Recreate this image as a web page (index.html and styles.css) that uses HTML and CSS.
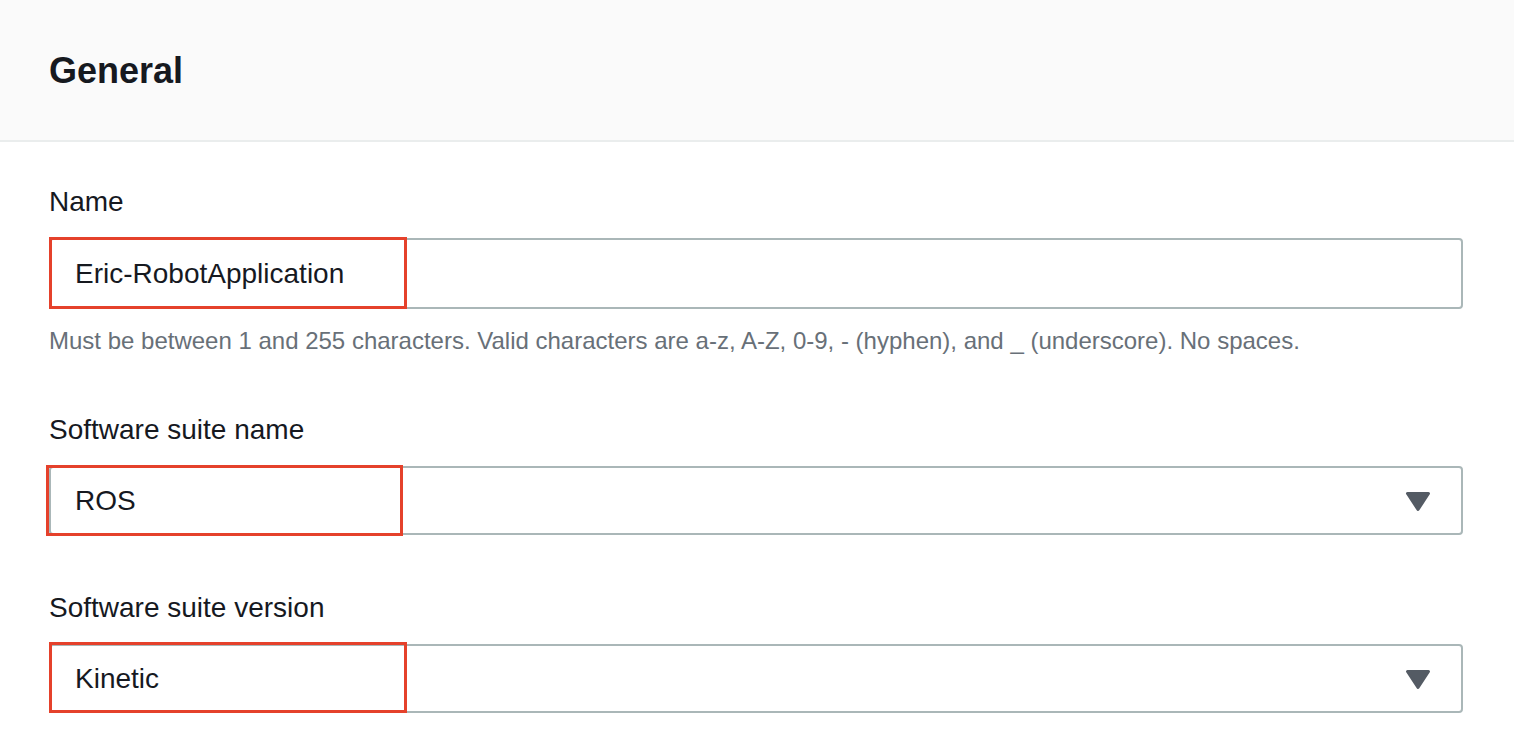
FILE: index.html
```html
<!DOCTYPE html>
<html lang="en">
<head>
<meta charset="utf-8">
<title>General</title>
<link rel="stylesheet" href="styles.css">
</head>
<body>
<section class="panel">
  <header class="panel-header">
    <h2 class="panel-title">General</h2>
  </header>
  <div class="panel-body">
    <div class="field">
      <label class="field-label">Name</label>
      <div class="control">
        <div class="input"><span class="value">Eric-RobotApplication</span></div>
        <div class="mark mark-a"></div>
      </div>
      <p class="hint">Must be between 1 and 255 characters. Valid characters are a-z, A-Z, 0-9, - (hyphen), and _ (underscore). No spaces.</p>
    </div>
    <div class="field">
      <label class="field-label">Software suite name</label>
      <div class="control">
        <div class="input select"><span class="value">ROS</span>
          <svg class="caret" width="26" height="21" viewBox="0 0 26 21"><path d="M2.5 2.5 H23.5 L13 18.5 Z" fill="#545b64" stroke="#545b64" stroke-width="3" stroke-linejoin="round"/></svg>
        </div>
        <div class="mark mark-b"></div>
      </div>
    </div>
    <div class="field">
      <label class="field-label">Software suite version</label>
      <div class="control">
        <div class="input select"><span class="value">Kinetic</span>
          <svg class="caret" width="26" height="21" viewBox="0 0 26 21"><path d="M2.5 2.5 H23.5 L13 18.5 Z" fill="#545b64" stroke="#545b64" stroke-width="3" stroke-linejoin="round"/></svg>
        </div>
        <div class="mark mark-c"></div>
      </div>
    </div>
  </div>
</section>
</body>
</html>
```
FILE: styles.css
```css
* { box-sizing: border-box; }
html, body { margin: 0; padding: 0; background: #ffffff; }
body {
  font-family: "Liberation Sans", Arial, sans-serif;
  color: #16191f;
}
.panel-header {
  height: 142px;
  background: #fafafa;
  border-bottom: 2px solid #eaeded;
  display: flex;
  align-items: center;
  padding: 0 49px;
}
.panel-title {
  margin: 0;
  font-size: 36px;
  line-height: 44px;
  font-weight: 700;
  color: #16191f;
  padding-top: 2px;
}
.panel-body {
  padding: 38px 51px 40px 49px;
  display: flex;
  flex-direction: column;
  gap: 51px;
}
.field { display: flex; flex-direction: column; }
.field-label {
  font-size: 28px;
  line-height: 44px;
  color: #16191f;
  margin-bottom: 14px;
}
.control { position: relative; }
.input {
  height: 71px;
  border: 2px solid #aab7b8;
  border-radius: 4px;
  display: flex;
  align-items: center;
  padding: 0 30px 0 24px;
  background: #fff;
}
.select { height: 69px; }
.value {
  font-size: 28px;
  line-height: 44px;
  color: #16191f;
  flex: 1;
  padding-top: 1px;
}
.caret { display: block; margin-top: 2px; }
.hint {
  margin: 16px 0 0;
  font-size: 24px;
  line-height: 32px;
  color: #687078;
}
.mark {
  position: absolute;
  border: 3px solid #e5412b;
  pointer-events: none;
}
.mark-a { left: 0; top: -1px; width: 358px; height: 72px; }
.mark-b { left: -3px; top: -1px; width: 357px; height: 71px; }
.mark-c { left: 0; top: -2px; width: 358px; height: 71px; }
```
